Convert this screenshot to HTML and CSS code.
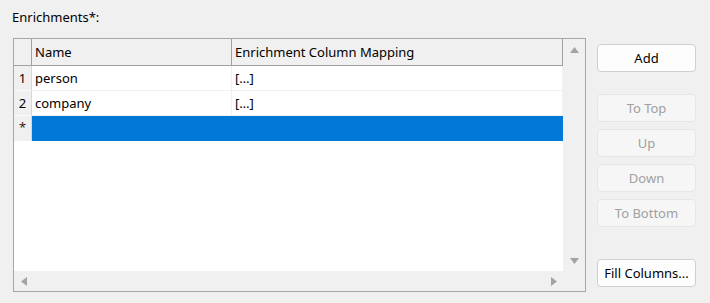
FILE: index.html
```html
<!DOCTYPE html>
<html lang="en">
<head>
  <meta charset="UTF-8">
  <title>Enrichments</title>
  <link rel="stylesheet" href="styles.css">
</head>
<body>
  <div class="panel">
    <div class="panel-label">Enrichments*:</div>
    <div class="panel-body">
      <div class="grid-frame">
        <div class="grid-view">
          <div class="grid-row grid-head">
            <div class="cell row-head"></div>
            <div class="cell">Name</div>
            <div class="cell">Enrichment Column Mapping</div>
          </div>
          <div class="grid-row">
            <div class="cell row-head">1</div>
            <div class="cell">person</div>
            <div class="cell">[…]</div>
          </div>
          <div class="grid-row">
            <div class="cell row-head">2</div>
            <div class="cell">company</div>
            <div class="cell">[…]</div>
          </div>
          <div class="grid-row row-new">
            <div class="cell row-head">*</div>
            <div class="cell"></div>
            <div class="cell"></div>
          </div>
        </div>
        <div class="vscroll">
          <svg class="arrow" width="9" height="6" viewBox="0 0 9 6"><polygon points="4.5,0 9,6 0,6" fill="#a3a3a3"/></svg>
          <svg class="arrow" width="9" height="6" viewBox="0 0 9 6"><polygon points="0,0 9,0 4.5,6" fill="#a3a3a3"/></svg>
        </div>
        <div class="hscroll">
          <svg class="arrow" width="6" height="9" viewBox="0 0 6 9"><polygon points="6,0 6,9 0,4.5" fill="#a3a3a3"/></svg>
          <svg class="arrow" width="6" height="9" viewBox="0 0 6 9"><polygon points="0,0 6,4.5 0,9" fill="#a3a3a3"/></svg>
        </div>
        <div class="corner"></div>
      </div>

      <div class="btn-col">
        <div class="btn">Add</div>
        <div class="btn btn-off gap-top">To Top</div>
        <div class="btn btn-off">Up</div>
        <div class="btn btn-off">Down</div>
        <div class="btn btn-off">To Bottom</div>
        <div class="btn btn-fill">Fill Columns...</div>
      </div>
    </div>
  </div>
</body>
</html>
```

FILE: styles.css
```css
html, body {
  margin: 0;
  padding: 0;
  background: #f0f0f0;
  font-family: 'Segoe UI', 'Noto Sans', sans-serif;
  font-size: 13px;
  color: #000;
}
.panel {
  padding: 9px 0 0 12px;
}
.panel-label {
  height: 17px;
  line-height: 17px;
  margin-bottom: 12px;
}
.panel-body {
  display: flex;
  align-items: flex-start;
}
.grid-frame {
  margin-left: 1px;
  display: grid;
  grid-template-columns: 549px 22px;
  grid-template-rows: 232px 20px;
  border: 1px solid #a6a6a6;
  background: #f0f0f0;
}
.grid-view {
  background: #fff;
  overflow: hidden;
}
.grid-row {
  display: grid;
  grid-template-columns: 18px 200px 331px;
  height: 25px;
}
.cell {
  box-sizing: border-box;
  border-right: 1px solid #f0f0f0;
  border-bottom: 1px solid #f0f0f0;
  padding-left: 3px;
  line-height: 24px;
  white-space: nowrap;
  overflow: hidden;
}
.row-head {
  background: #f0f0f0;
  border-right-color: #d7d7d7;
  border-bottom-color: #fafafa;
  padding-left: 0;
  text-align: center;
}
.grid-head {
  height: 27px;
}
.grid-head .cell {
  background: #f0f0f0;
  border-right-color: #a0a0a0;
  border-bottom-color: #a0a0a0;
  line-height: 26px;
}
.grid-head .row-head {
  border-right-color: #a0a0a0;
}
.row-new .cell {
  background: #0078d7;
  border-color: #0078d7;
}
.row-new .row-head {
  background: #f0f0f0;
  border-right-color: #d7d7d7;
  border-bottom-color: #f0f0f0;
  color: #3a2410;
  line-height: 22px;
}
.vscroll {
  display: flex;
  flex-direction: column;
  justify-content: space-between;
  align-items: center;
  padding: 8px 0 7px 1px;
}
.hscroll {
  display: flex;
  justify-content: space-between;
  align-items: center;
  padding: 0 6px 0 7px;
}
.arrow {
  display: block;
}
.btn-col {
  display: flex;
  flex-direction: column;
  gap: 7px;
  margin: 6px 0 0 11px;
}
.btn {
  box-sizing: border-box;
  width: 99px;
  height: 28px;
  display: flex;
  align-items: center;
  justify-content: center;
  white-space: nowrap;
  overflow: hidden;
  background: #fdfdfd;
  border: 1px solid #cfcfcf;
  border-radius: 4px;
}
.btn-off {
  background: #f6f6f6;
  border-color: #e6e6e6;
  color: #a0a0a0;
}
.gap-top {
  margin-top: 15px;
}
.btn-fill {
  margin-top: 25px;
}
```
